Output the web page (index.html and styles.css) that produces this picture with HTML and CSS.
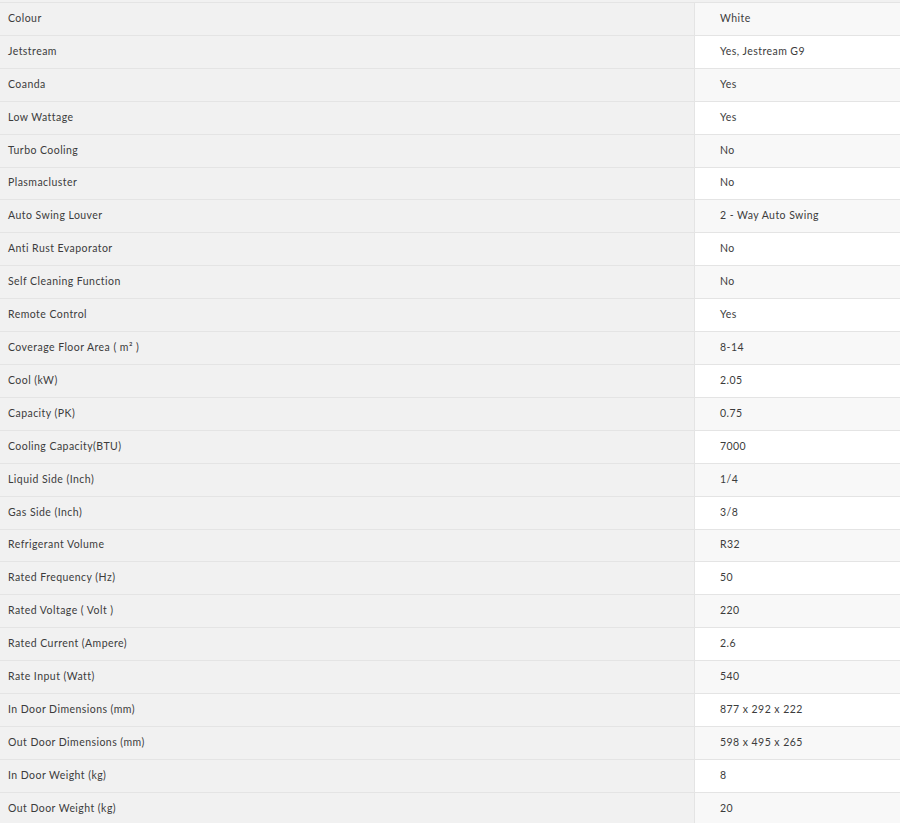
FILE: index.html
```html
<!DOCTYPE html>
<html>
<head>
    <title>Specifications</title>
    <link rel="stylesheet" href="styles.css">
</head>
<body>
    <table class="specs">
        <tr><td class="label">Colour</td><td class="value">White</td></tr>
        <tr><td class="label">Jetstream</td><td class="value">Yes, Jestream G9</td></tr>
        <tr><td class="label">Coanda</td><td class="value">Yes</td></tr>
        <tr><td class="label">Low Wattage</td><td class="value">Yes</td></tr>
        <tr><td class="label">Turbo Cooling</td><td class="value">No</td></tr>
        <tr><td class="label">Plasmacluster</td><td class="value">No</td></tr>
        <tr><td class="label">Auto Swing Louver</td><td class="value">2 - Way Auto Swing</td></tr>
        <tr><td class="label">Anti Rust Evaporator</td><td class="value">No</td></tr>
        <tr><td class="label">Self Cleaning Function</td><td class="value">No</td></tr>
        <tr><td class="label">Remote Control</td><td class="value">Yes</td></tr>
        <tr><td class="label">Coverage Floor Area ( m² )</td><td class="value">8-14</td></tr>
        <tr><td class="label">Cool (kW)</td><td class="value">2.05</td></tr>
        <tr><td class="label">Capacity (PK)</td><td class="value">0.75</td></tr>
        <tr><td class="label">Cooling Capacity(BTU)</td><td class="value">7000</td></tr>
        <tr><td class="label">Liquid Side (Inch)</td><td class="value">1/4</td></tr>
        <tr><td class="label">Gas Side (Inch)</td><td class="value">3/8</td></tr>
        <tr><td class="label">Refrigerant Volume</td><td class="value">R32</td></tr>
        <tr><td class="label">Rated Frequency (Hz)</td><td class="value">50</td></tr>
        <tr><td class="label">Rated Voltage ( Volt )</td><td class="value">220</td></tr>
        <tr><td class="label">Rated Current (Ampere)</td><td class="value">2.6</td></tr>
        <tr><td class="label">Rate Input (Watt)</td><td class="value">540</td></tr>
        <tr><td class="label">In Door Dimensions (mm)</td><td class="value">877 x 292 x 222</td></tr>
        <tr><td class="label">Out Door Dimensions (mm)</td><td class="value">598 x 495 x 265</td></tr>
        <tr><td class="label">In Door Weight (kg)</td><td class="value">8</td></tr>
        <tr><td class="label">Out Door Weight (kg)</td><td class="value">20</td></tr>
    </table>
</body>
</html>
```
FILE: styles.css
```css
body { margin: 0; padding-top: 2px; background: #f1f1f1; font-family: Lato, "Open Sans", sans-serif; }
.specs {
    width: 100%; border-collapse: collapse;
    font-size: 10.5px; letter-spacing: 0.45px; color: #3c3c3c;
}
.specs td { height: 29.92px; padding: 0 0 2px; border-top: 1px solid #e4e4e4; vertical-align: middle; }
.label { width: 686px; padding-left: 8px !important; background: #f1f1f1; border-right: 1px solid #e4e4e4; }
.value { padding-left: 25px !important; background: #f8f8f8; }
.specs tr:nth-child(even) .value { background: #fff; }
```
